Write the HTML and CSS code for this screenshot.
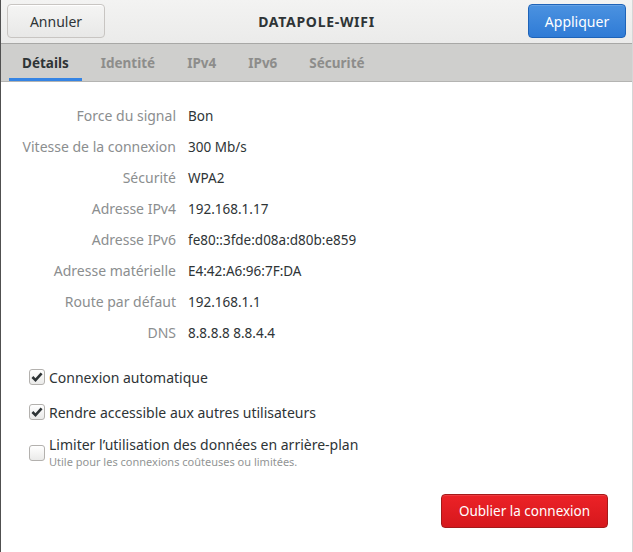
FILE: index.html
```html
<!DOCTYPE html>
<html lang="fr">
<head>
<meta charset="utf-8">
<link rel="stylesheet" href="styles.css">
</head>
<body>
<div class="window">
  <header class="headerbar">
    <button class="btn btn-cancel">Annuler</button>
    <div class="title">DATAPOLE-WIFI</div>
    <button class="btn btn-apply">Appliquer</button>
  </header>
  <nav class="tabs">
    <span class="tab active">Détails</span>
    <span class="tab">Identité</span>
    <span class="tab">IPv4</span>
    <span class="tab">IPv6</span>
    <span class="tab">Sécurité</span>
  </nav>
  <main class="content">
    <div class="details">
      <div class="label">Force du signal</div><div class="value">Bon</div>
      <div class="label">Vitesse de la connexion</div><div class="value">300 Mb/s</div>
      <div class="label">Sécurité</div><div class="value">WPA2</div>
      <div class="label">Adresse IPv4</div><div class="value">192.168.1.17</div>
      <div class="label">Adresse IPv6</div><div class="value">fe80::3fde:d08a:d80b:e859</div>
      <div class="label">Adresse matérielle</div><div class="value">E4:42:A6:96:7F:DA</div>
      <div class="label">Route par défaut</div><div class="value">192.168.1.1</div>
      <div class="label">DNS</div><div class="value">8.8.8.8 8.8.4.4</div>
    </div>
    <div class="options">
      <div class="option">
        <span class="check checked"><svg viewBox="0 0 16 16" width="16" height="16"><path d="M3.4 8 L6.5 11.1 L12.6 4.4" fill="none" stroke="#2e3436" stroke-width="2.6" stroke-linecap="butt" stroke-linejoin="miter"/></svg></span>
        <span class="opt-text">Connexion automatique</span>
      </div>
      <div class="option">
        <span class="check checked"><svg viewBox="0 0 16 16" width="16" height="16"><path d="M3.4 8 L6.5 11.1 L12.6 4.4" fill="none" stroke="#2e3436" stroke-width="2.6" stroke-linecap="butt" stroke-linejoin="miter"/></svg></span>
        <span class="opt-text">Rendre accessible aux autres utilisateurs</span>
      </div>
      <div class="option option-multi">
        <span class="check"></span>
        <span class="opt-stack">
          <span class="opt-text">Limiter l’utilisation des données en arrière-plan</span>
          <span class="opt-sub">Utile pour les connexions coûteuses ou limitées.</span>
        </span>
      </div>
    </div>
    <div class="actions">
      <button class="btn btn-forget">Oublier la connexion</button>
    </div>
  </main>
</div>
</body>
</html>
```

FILE: styles.css
```css
* { box-sizing: border-box; }
html, body { margin: 0; padding: 0; }
body {
  width: 633px;
  height: 552px;
  overflow: hidden;
  background: #ffffff;
  font-family: "Noto Sans", "DejaVu Sans", sans-serif;
  font-size: 14px;
  color: #2e3436;
}
.window {
  width: 633px;
  height: 552px;
  border-left: 1px solid #505050;
  border-right: 1px solid #d6d6d6;
  display: flex;
  flex-direction: column;
  background: #ffffff;
}
.headerbar {
  height: 44px;
  flex: none;
  display: flex;
  align-items: flex-start;
  justify-content: space-between;
  padding: 4px 6px 0 6px;
  background: linear-gradient(#f3f3f2, #ebebea);
  border-bottom: 1px solid #a8a8a6;
}
.btn {
  font-family: inherit;
  font-size: 14px;
  height: 34px;
  border-radius: 4px;
  cursor: default;
  padding: 0;
}
.btn-cancel {
  width: 98px;
  color: #2e3436;
  background: linear-gradient(#f5f5f4, #e8e8e7);
  border: 1px solid #c8c5c2;
  box-shadow: inset 0 1px #ffffff;
}
.btn-apply {
  width: 98px;
  color: #ffffff;
  background: linear-gradient(#4b92e0, #2f7bd6);
  border: 1px solid #1e63b8;
  box-shadow: inset 0 1px rgba(255,255,255,0.15);
}
.title {
  align-self: center;
  margin-top: -5px;
  font-weight: bold;
  font-size: 14px;
  letter-spacing: 0.7px;
  color: #2e3436;
}
.tabs {
  height: 38px;
  flex: none;
  display: flex;
  gap: 6px;
  padding: 0 8px;
  background: #cfcfcd;
  border-bottom: 1px solid #b4b4b2;
}
.tab {
  display: flex;
  align-items: center;
  padding: 0 13px;
  padding-top: 3px;
  font-size: 13.5px;
  font-weight: bold;
  color: #8d8d8b;
  border-bottom: 3px solid transparent;
}
.tab.active {
  color: #2e3436;
  border-bottom-color: #3584e4;
}
.content {
  flex: 1;
  display: flex;
  flex-direction: column;
}
.details {
  display: grid;
  grid-template-columns: 175px 1fr;
  grid-auto-rows: 31px;
  column-gap: 12px;
  padding-top: 18px;
}
.label {
  display: flex;
  align-items: center;
  justify-content: flex-end;
  color: #8b8e8f;
  font-size: 14px;
}
.value {
  display: flex;
  align-items: center;
  color: #2e3436;
  font-size: 13.5px;
}
.options {
  display: flex;
  flex-direction: column;
  padding-left: 28px;
  margin-top: 19px;
  gap: 15px;
}
.option {
  display: flex;
  align-items: center;
  gap: 4px;
  height: 20px;
}
.option-multi {
  height: auto;
  margin-top: -1px;
}
.check {
  width: 16px;
  height: 16px;
  flex: none;
  border: 1px solid #b3b1ae;
  border-radius: 3px;
  background: linear-gradient(#ffffff, #eaeae9);
  display: flex;
  align-items: center;
  justify-content: center;
  overflow: hidden;
}
.check svg { display: block; margin: -1px; }
.opt-text { color: #2e3436; font-size: 14px; }
.opt-stack {
  display: flex;
  flex-direction: column;
  line-height: 18px;
}
.opt-sub {
  font-size: 11px;
  line-height: 15px;
  color: #929595;
}
.actions {
  display: flex;
  justify-content: flex-end;
  padding-right: 24px;
  margin-top: 25px;
}
.btn-forget {
  width: 167px;
  height: 34px;
  color: #ffffff;
  font-size: 13.5px;
  background: linear-gradient(#ec2227, #d6181d);
  border: 1px solid #a51a1a;
  box-shadow: inset 0 1px rgba(255,255,255,0.12);
}
```
